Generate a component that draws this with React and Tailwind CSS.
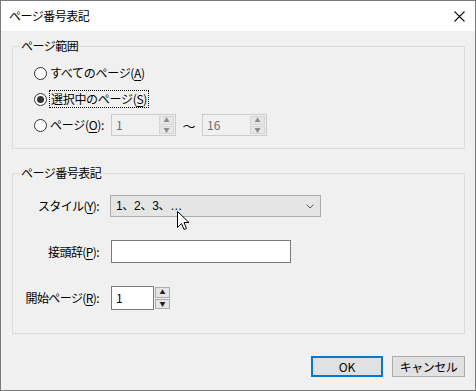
import React from 'react';

const font = { fontFamily: '"Noto Sans CJK JP", "Noto Sans", sans-serif' };

// accelerator key label, e.g. (A)
const Key = ({ k }) => (
  <span>
    (<span className="underline underline-offset-2">{k}</span>)
  </span>
);

const Radio = ({ checked }) => (
  <span className="w-[13px] h-[13px] rounded-full border border-[#333333] bg-white flex items-center justify-center shrink-0">
    {checked && <span className="w-[7px] h-[7px] rounded-full bg-[#333333]" />}
  </span>
);

const SpinButtons = ({ disabled }) => (
  <div className="flex flex-col w-[17px] h-full gap-px p-px">
    {['▲', '▼'].map((a) => (
      <div
        key={a}
        className={`flex-1 flex items-center justify-center text-[6px] leading-none border ${
          disabled ? 'border-[#d4d4d4] bg-[#e6e6e6] text-[#8a8a8a]' : 'border-[#adadad] bg-[#e5e5e5] text-[#222222]'
        }`}
      >
        {a}
      </div>
    ))}
  </div>
);

const DisabledSpin = ({ value }) => (
  <div className="w-[65px] h-[22px] border border-[#cccccc] bg-[#f0f0f0] flex items-center">
    <span className="flex-1 pl-[4px] text-[#6d6d6d]">{value}</span>
    <SpinButtons disabled />
  </div>
);

export default function App() {
  return (
    <div
      className="relative w-[476px] h-[391px] bg-[#f0f0f0] text-[12px] leading-[16px] text-black flex flex-col border-l border-r border-b border-[#7a7a7a] overflow-hidden"
      style={font}
    >
      {/* Title bar */}
      <div className="h-[31px] bg-white flex items-center justify-between pl-[8px] pr-[10px] border-t border-[#7a7a7a] shrink-0">
        <span className="tracking-[-0.5px]">ページ番号表記</span>
        <svg width="11" height="11" viewBox="0 0 11 11" stroke="#111" strokeWidth="1.1">
          <path d="M0.5 0.5 L10.5 10.5 M10.5 0.5 L0.5 10.5" />
        </svg>
      </div>

      <div className="flex-1 flex flex-col pl-[11px] pr-[10px] pt-[7px]">
        {/* Page range */}
        <fieldset className="border border-[#dcdcdc] pt-[8px] pb-[12px]">
          <legend className="ml-[7px] px-[1px] tracking-[-0.5px]">ページ範囲</legend>
          <div className="pl-[21px] flex flex-col gap-[4px]">
            <div className="h-[22px] flex items-center gap-[3px]">
              <Radio />
              <span className="tracking-[-0.3px]">
                すべてのページ<Key k="A" />
              </span>
            </div>
            <div className="h-[22px] flex items-center gap-[3px]">
              <Radio checked />
              <span className="outline outline-1 outline-dotted outline-black px-px tracking-[-0.3px]">
                選択中のページ<Key k="S" />
              </span>
            </div>
            <div className="h-[22px] flex items-center">
              <div className="w-[77px] flex items-center gap-[3px]">
                <Radio />
                <span className="tracking-[-0.3px]">
                  ページ<Key k="O" />:
                </span>
              </div>
              <DisabledSpin value="1" />
              <span className="w-[26px] text-center pt-[2px] text-[13px]">～</span>
              <DisabledSpin value="16" />
            </div>
          </div>
        </fieldset>

        {/* Page numbering */}
        <fieldset className="mt-[16px] border border-[#dcdcdc] pt-[14px] pb-[23px] flex flex-col gap-[23px]">
          <legend className="ml-[7px] px-[1px] tracking-[-0.5px]">ページ番号表記</legend>
          <div className="h-[22px] flex items-center">
            <span className="w-[86px] text-right tracking-[-0.6px]">
              スタイル<Key k="Y" />:
            </span>
            <div className="ml-[11px] w-[211px] h-[22px] border border-[#adadad] bg-[#e5e5e5] flex items-center justify-between pl-[5px] pr-[6px]">
              <span
                className="tracking-[-0.3px]"
                style={{ fontFamily: '"Liberation Sans", "Noto Sans CJK JP", sans-serif' }}
              >
                1、2、3、…
              </span>
              <svg width="8" height="5" viewBox="0 0 8 5" fill="none" stroke="#555" strokeWidth="1">
                <path d="M0.5 0.5 L4 4 L7.5 0.5" />
              </svg>
            </div>
          </div>
          <div className="h-[23px] flex items-center">
            <span className="w-[86px] text-right tracking-[-0.6px]">
              接頭辞<Key k="P" />:
            </span>
            <div className="ml-[12px] w-[180px] h-[23px] border border-[#7a7a7a] bg-white" />
          </div>
          <div className="h-[24px] flex items-center">
            <span className="w-[86px] text-right tracking-[-0.6px]">
              開始ページ<Key k="R" />:
            </span>
            <div className="ml-[12px] w-[43px] h-[24px] border border-[#7a7a7a] bg-white flex items-center pl-[4px]">
              1
            </div>
            <div className="w-[17px] h-[24px]">
              <SpinButtons />
            </div>
          </div>
        </fieldset>

        {/* Buttons */}
        <div className="mt-auto mb-[13px] flex justify-end gap-[9px]">
          <button className="w-[72px] h-[21px] border-2 border-[#0078d7] bg-[#e1e1e1] leading-none">OK</button>
          <button className="w-[73px] h-[21px] border border-[#adadad] bg-[#e1e1e1] leading-none tracking-[-0.5px]">
            キャンセル
          </button>
        </div>
      </div>

      {/* mouse cursor */}
      <svg className="absolute left-[176px] top-[211px]" width="13" height="21" viewBox="0 0 13 21">
        <path
          d="M0.5 0.5 L0.5 16.5 L4.5 12.5 L7 18.5 L9.5 17.5 L7 11.5 L12 11.5 Z"
          fill="white"
          stroke="black"
          strokeWidth="1"
          strokeLinejoin="round"
        />
      </svg>
    </div>
  );
}
